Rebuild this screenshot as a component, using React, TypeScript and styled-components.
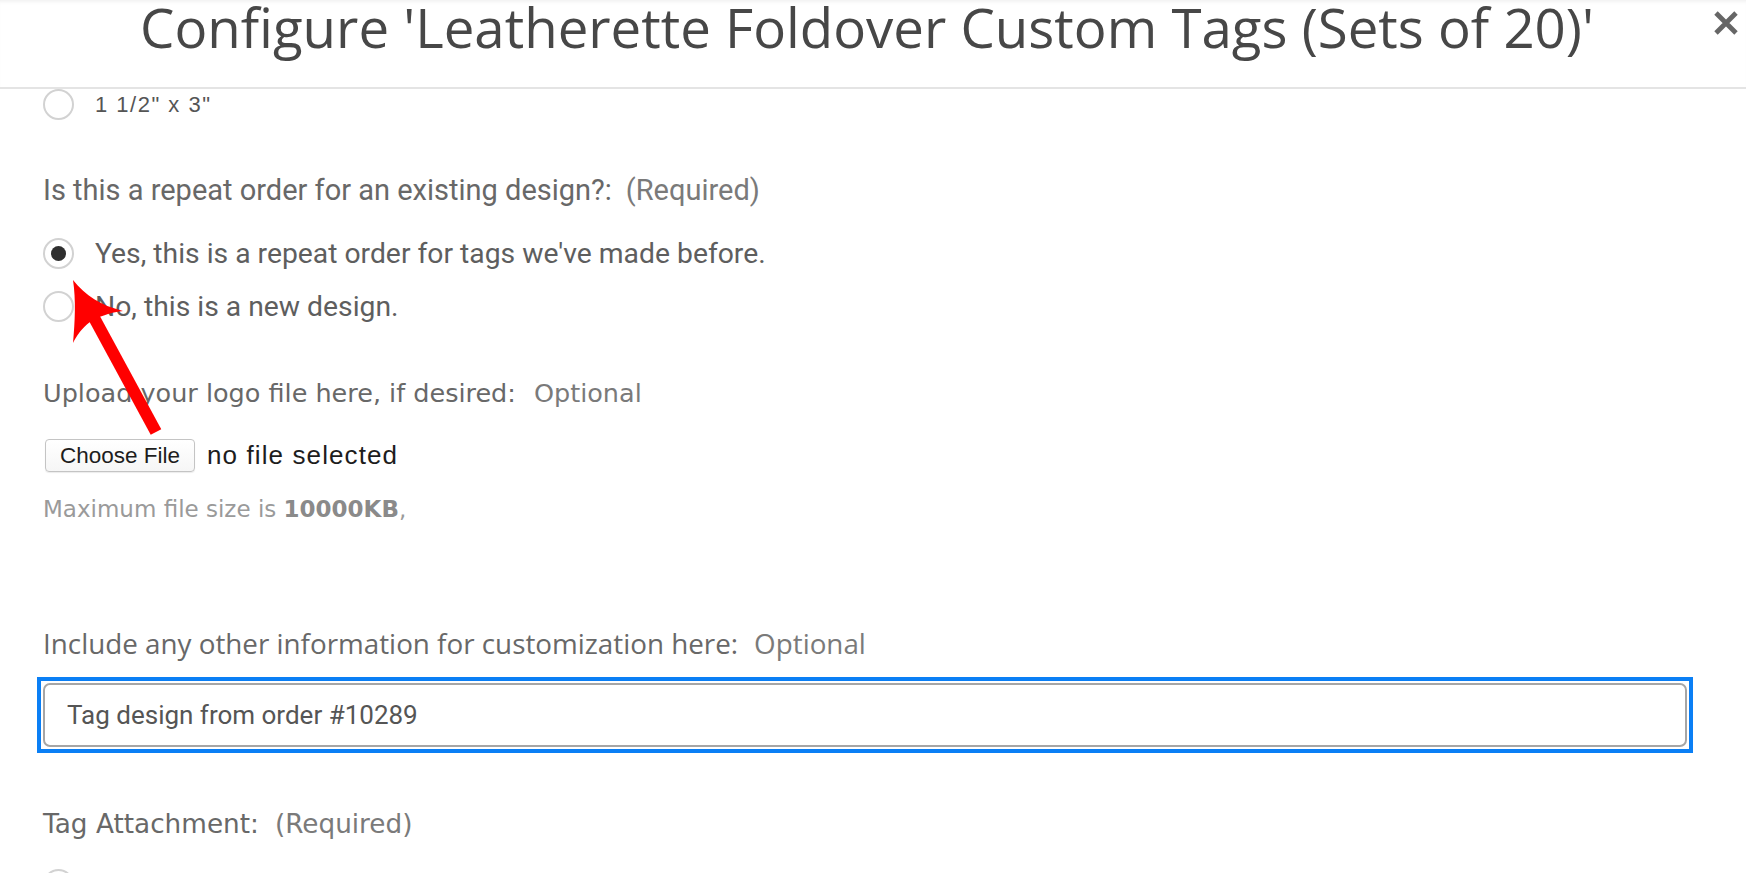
import { useEffect, useRef } from 'react';
import styled, { createGlobalStyle } from 'styled-components';

const GlobalStyle = createGlobalStyle`
  html, body {
    margin: 0;
    padding: 0;
    background: #ffffff;
  }
  * {
    box-sizing: border-box;
  }
`;

const Page = styled.div`
  position: relative;
  width: 1746px;
  height: 873px;
  overflow: hidden;
  background: #fff;
`;

const Header = styled.header`
  height: 89px;
  display: grid;
  grid-template-columns: 1fr auto 1fr;
  align-items: start;
  border-bottom: 2px solid #e4e4e4;
  box-shadow: inset 0 4px 4px -3px rgba(0, 0, 0, 0.08);
`;

const Title = styled.h1`
  grid-column: 2;
  margin: 0 12px 0 0;
  padding-top: 1px;
  font-family: 'Open Sans', sans-serif;
  font-weight: 400;
  font-size: 54.6px;
  line-height: 52px;
  color: #474747;
  white-space: nowrap;
`;

const Close = styled.button`
  grid-column: 3;
  justify-self: end;
  margin: 10px 7px 0 0;
  border: none;
  background: none;
  padding: 0;
  display: flex;
`;

const Body = styled.div`
  padding: 0 0 0 43px;
  display: flex;
  flex-direction: column;
`;

const OptionRow = styled.label<{ $gap?: number }>`
  display: flex;
  align-items: center;
  height: 31px;
  margin-top: ${(p) => p.$gap ?? 0}px;
  gap: 21px;
`;

const Radio = styled.span<{ $checked?: boolean }>`
  flex: none;
  width: 31px;
  height: 31px;
  border-radius: 50%;
  border: 2px solid #d2d2d2;
  background: #fff;
  display: flex;
  align-items: center;
  justify-content: center;

  &::after {
    content: '';
    display: ${(p) => (p.$checked ? 'block' : 'none')};
    width: 15px;
    height: 15px;
    border-radius: 50%;
    background: #2f2f2f;
  }
`;

const SizeText = styled.span`
  font-family: 'Liberation Sans', Arial, sans-serif;
  font-size: 22px;
  color: #555;
  letter-spacing: 1.5px;
`;

const OptionText = styled.span`
  font-family: 'Roboto', sans-serif;
  font-size: 28.3px;
  color: #5e5e5e;
`;

const fonts = {
  narrow: "'Roboto', sans-serif",
  wide: "'DejaVu Sans', sans-serif",
  open: "'Open Sans', sans-serif",
};

const Label = styled.div<{ $gap: number; $font: keyof typeof fonts; $size: number; $space: number }>`
  margin-top: ${(p) => p.$gap}px;
  height: 40px;
  line-height: 40px;
  font-family: ${(p) => fonts[p.$font]};
  font-size: ${(p) => p.$size}px;
  color: #686868;
  white-space: nowrap;

  span {
    margin-left: ${(p) => p.$space}px;
    color: #7a7a7a;
  }
`;

const FileRow = styled.div`
  margin-top: 26px;
  display: flex;
  align-items: center;
  gap: 12px;
`;

const FileButton = styled.button`
  height: 33px;
  padding: 0 14px;
  margin-left: 2px;
  border: 1px solid #c4c4c4;
  border-radius: 4px;
  background: linear-gradient(#ffffff, #f6f6f6);
  box-shadow: 0 1px 1px rgba(0, 0, 0, 0.08);
  font-family: 'Liberation Sans', Arial, sans-serif;
  font-size: 22.5px;
  color: #1d1d1d;
`;

const FileName = styled.span`
  font-family: 'Liberation Sans', Arial, sans-serif;
  font-size: 26px;
  letter-spacing: 1.1px;
  color: #1d1d1d;
`;

const Hint = styled.div`
  margin-top: 22px;
  height: 30px;
  line-height: 30px;
  font-family: 'DejaVu Sans', sans-serif;
  font-size: 23px;
  color: #9a9a9a;

  b {
    color: #8a8a8a;
  }
`;

const FocusRing = styled.div`
  margin: 14px 0 0 -6px;
  width: 1656px;
  height: 76px;
  border: 4px solid #0a7ff5;
  padding: 2px;
`;

const TextInput = styled.input`
  display: block;
  width: 100%;
  height: 100%;
  padding: 0 22px;
  border: 2px solid #a6a6a6;
  border-radius: 7px;
  outline: none;
  font-family: 'Roboto', sans-serif;
  font-size: 26px;
  color: #555;
  background: #fff;
  caret-color: #222;
`;

const Arrow = styled.svg`
  position: absolute;
  left: 0;
  top: 0;
  pointer-events: none;
`;

export default function App() {
  const inputRef = useRef<HTMLInputElement>(null);

  useEffect(() => {
    const el = inputRef.current;
    if (el) {
      el.focus();
      el.setSelectionRange(el.value.length, el.value.length);
    }
  }, []);

  return (
    <Page>
      <GlobalStyle />
      <Header>
        <Title>Configure 'Leatherette Foldover Custom Tags (Sets of 20)'</Title>
        <Close aria-label="Close">
          <svg width="26" height="26" viewBox="0 0 26 26">
            <path d="M3 3 L23 23 M23 3 L3 23" stroke="#666" strokeWidth="4.8" />
          </svg>
        </Close>
      </Header>
      <Body>
        <OptionRow>
          <Radio />
          <SizeText>1 1/2" x 3"</SizeText>
        </OptionRow>

        <Label $gap={50} $font="narrow" $size={29} $space={14}>
          Is this a repeat order for an existing design?:<span>(Required)</span>
        </Label>
        <OptionRow $gap={28}>
          <Radio $checked />
          <OptionText>Yes, this is a repeat order for tags we've made before.</OptionText>
        </OptionRow>
        <OptionRow $gap={22}>
          <Radio />
          <OptionText>No, this is a new design.</OptionText>
        </OptionRow>

        <Label $gap={51} $font="wide" $size={25.5} $space={18}>
          Upload your logo file here, if desired:<span>Optional</span>
        </Label>
        <FileRow>
          <FileButton>Choose File</FileButton>
          <FileName>no file selected</FileName>
        </FileRow>
        <Hint>
          Maximum file size is <b>10000KB</b>,
        </Hint>

        <Label $gap={99} $font="open" $size={27.8} $space={16}>
          Include any other information for customization here:<span>Optional</span>
        </Label>
        <FocusRing>
          <TextInput ref={inputRef} defaultValue="Tag design from order #10289" />
        </FocusRing>

        <Label $gap={51} $font="wide" $size={26.3} $space={16}>
          Tag Attachment:<span>(Required)</span>
        </Label>
        <OptionRow $gap={25}>
          <Radio />
        </OptionRow>
      </Body>

      <Arrow width="1746" height="873" viewBox="0 0 1746 873">
        <line x1="156" y1="432" x2="92" y2="314" stroke="#ff0000" strokeWidth="12" />
        <path
          d="M73 280 C 86 296 100 305 123 311 C 108 313 98 317 90 322 C 82 328 77 335 73 343 C 75 322 76 300 73 280 Z"
          fill="#ff0000"
        />
      </Arrow>
    </Page>
  );
}
